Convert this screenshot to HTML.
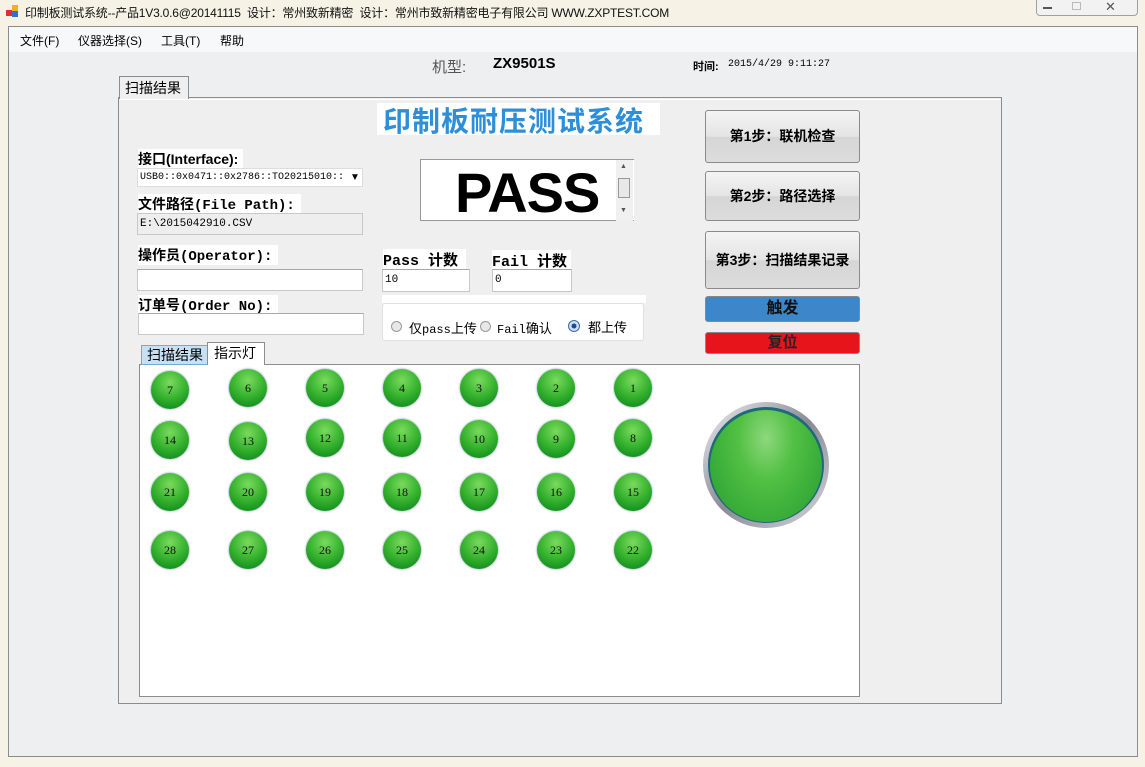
<!DOCTYPE html>
<html><head><meta charset="utf-8"><style>
*{margin:0;padding:0;box-sizing:border-box}
body{width:1145px;height:767px;overflow:hidden;background:#f6f2e6;font-family:"Liberation Sans","Noto Sans CJK SC",sans-serif;position:relative;color:#000}
.a{position:absolute}
.cj{font-family:"Liberation Sans","Noto Sans CJK SC",sans-serif}
.mono{font-family:"Liberation Mono","Noto Sans CJK SC",monospace}
.box{background:#fff;border:1px solid #c8c8c8;border-top-color:#a8a8a8}
.led{position:absolute;width:38px;height:38px;border-radius:50%;background:radial-gradient(circle at 50% 30%,#7ada5e 0%,#36b22e 50%,#159020 82%,#2a6a70 100%);box-shadow:0 0 2px #6a8aa0;font:12px "Liberation Serif",serif;text-align:center;line-height:38px;color:#111}
.btn{position:absolute;left:705px;width:155px;border:1px solid #8a8a8a;border-radius:3px;background:linear-gradient(#f4f4f4,#e4e4e4 50%,#d6d6d6 51%,#dcdcdc);font-weight:bold;font-size:14px;text-align:center}
</style></head><body>
<div class="a" style="left:6px;top:5px;width:13px;height:13px">
<div class="a" style="left:0;top:5px;width:6px;height:6px;background:#e03030"></div>
<div class="a" style="left:6px;top:0;width:6px;height:6px;background:#f0b020"></div>
<div class="a" style="left:6px;top:6px;width:6px;height:6px;background:#3070d0"></div></div>
<div class="a" style="left:25px;top:4px;font-size:12px;color:#111;white-space:nowrap;letter-spacing:-0.2px">印制板测试系统--产品1V3.0.6@20141115&nbsp; 设计：常州致新精密&nbsp; 设计：常州市致新精密电子有限公司 WWW.ZXPTEST.COM</div>
<div class="a" style="left:1036px;top:0;width:102px;height:16px;border:1px solid #a0a0a0;border-top:none;border-radius:0 0 4px 4px;background:#f2f2f2"></div>
<div class="a" style="left:1043px;top:7px;width:9px;height:2px;background:#555"></div>
<div class="a" style="left:1072px;top:2px;width:9px;height:8px;border:1px solid #bbb"></div>
<div class="a" style="left:1105px;top:-1px;font-size:13px;color:#555">✕</div>
<div class="a" style="left:8px;top:26px;width:1130px;height:731px;background:#eeeff0;border:1px solid #8c8c8c"></div>
<div class="a" style="left:9px;top:27px;width:1128px;height:25px;background:#f7f8fa"></div>
<div class="a" style="left:20px;top:32px;font-size:12px">文件(F)</div>
<div class="a" style="left:78px;top:32px;font-size:12px">仪器选择(S)</div>
<div class="a" style="left:161px;top:32px;font-size:12px">工具(T)</div>
<div class="a" style="left:220px;top:32px;font-size:12px">帮助</div>
<div class="a" style="left:432px;top:56px;font-size:15px;color:#555">机型:</div>
<div class="a" style="left:493px;top:55px;font-size:15px;font-weight:bold">ZX9501S</div>
<div class="a" style="left:693px;top:58px;font-size:11px;font-weight:bold">时间:</div>
<div class="a mono" style="left:728px;top:59px;font-size:10px">2015/4/29 9:11:27</div>
<div class="a" style="left:118px;top:97px;width:884px;height:607px;border:1px solid #8c8c8c;background:#efefef"></div>
<div class="a" style="left:120px;top:99px;width:880px;height:1px;background:#fff"></div>
<div class="a" style="left:119px;top:76px;width:70px;height:23px;border:1px solid #8c8c8c;border-bottom:none;background:#efefef;font-size:14px;padding:1px 0 0 5px">扫描结果</div>
<div class="a" style="left:377px;top:103px;width:283px;height:32px;background:#fff"></div>
<div class="a" style="left:383px;top:100px;font-size:28px;font-weight:bold;color:#2e8ed8;letter-spacing:1px;white-space:nowrap">印制板耐压测试系统</div>
<div class="a" style="left:138px;top:149px;font-size:14px;font-weight:bold;background:#fff;padding-right:5px">接口(Interface):</div>
<div class="a box mono" style="left:137px;top:168px;width:226px;height:19px;font-size:10px;padding:3px 2px;border-color:#ddd">USB0::0x0471::0x2786::TO20215010::</div>
<div class="a" style="left:350px;top:172px;font-size:10px">▼</div>
<div class="a" style="left:138px;top:194px;font-size:14px;font-weight:bold;background:#fff;padding-right:6px">文件路径<span class="mono">(File Path):</span></div>
<div class="a mono" style="left:137px;top:213px;width:226px;height:22px;font-size:11px;padding:4px 2px;border:1px solid #c8c8c8;background:#eeeeee">E:\2015042910.CSV</div>
<div class="a" style="left:138px;top:245px;font-size:14px;font-weight:bold;background:#fff;padding-right:6px">操作员<span class="mono">(Operator):</span></div>
<div class="a box" style="left:137px;top:269px;width:226px;height:22px"></div>
<div class="a" style="left:138px;top:295px;font-size:14px;font-weight:bold;background:#fff;padding-right:6px">订单号<span class="mono">(Order No):</span></div>
<div class="a box" style="left:138px;top:313px;width:226px;height:22px"></div>
<div class="a" style="left:420px;top:159px;width:214px;height:62px;background:#fff;border:1px solid #999;border-right:none"></div>
<div class="a" style="left:616px;top:160px;width:17px;height:61px;background:#f0f0f0"></div>
<div class="a" style="left:618px;top:178px;width:12px;height:20px;border:1px solid #999;background:#e8e8e8"></div>
<div class="a" style="left:620px;top:163px;font-size:7px;color:#555">▲</div>
<div class="a" style="left:620px;top:207px;font-size:7px;color:#555">▼</div>
<div class="a" style="left:455px;top:160px;font-size:56px;font-weight:bold;letter-spacing:-1px;line-height:66px">PASS</div>
<div class="a mono" style="left:383px;top:249px;font-size:15px;font-weight:bold;background:#fff;padding-right:8px">Pass <span class="cj">计数</span></div>
<div class="a mono" style="left:492px;top:250px;font-size:15px;font-weight:bold;background:#fff;padding-right:4px">Fail <span class="cj">计数</span></div>
<div class="a box mono" style="left:382px;top:269px;width:88px;height:23px;font-size:11px;padding:4px 2px">10</div>
<div class="a box mono" style="left:492px;top:269px;width:80px;height:23px;font-size:11px;padding:4px 2px">0</div>
<div class="a" style="left:382px;top:295px;width:264px;height:8px;background:#fff"></div>
<div class="a" style="left:382px;top:303px;width:262px;height:38px;background:#fff;border:1px solid #e0e0e0;border-radius:3px"></div>
<div class="a" style="left:391px;top:321px;width:11px;height:11px;border-radius:50%;border:1px solid #999;background:#e8e8e8"></div>
<div class="a" style="left:409px;top:318px;font-size:13px">仅<span class="mono" style="font-size:12px">pass</span>上传</div>
<div class="a" style="left:480px;top:321px;width:11px;height:11px;border-radius:50%;border:1px solid #999;background:#e8e8e8"></div>
<div class="a" style="left:497px;top:318px;font-size:13px"><span class="mono" style="font-size:12px">Fail</span>确认</div>
<div class="a" style="left:568px;top:320px;width:12px;height:12px;border-radius:50%;border:1px solid #3a6ea5;background:radial-gradient(#1a4a90 30%,#cfe0f5 40%)"></div>
<div class="a" style="left:588px;top:317px;font-size:13px">都上传</div>
<div class="btn" style="top:110px;height:53px;line-height:51px">第1步：联机检查</div>
<div class="btn" style="top:171px;height:50px;line-height:48px">第2步：路径选择</div>
<div class="btn" style="top:231px;height:58px;line-height:56px">第3步：扫描结果记录</div>
<div class="a" style="left:705px;top:296px;width:155px;height:26px;border:1px solid #888;border-radius:3px;background:#3d86c9;font-size:16px;font-weight:bold;text-align:center;line-height:23px;color:#111">触发</div>
<div class="a" style="left:705px;top:332px;width:155px;height:22px;border:1px solid #888;border-radius:3px;background:#e8141c;font-size:15px;font-weight:bold;text-align:center;line-height:19px;color:#222">复位</div>
<div class="a" style="left:139px;top:364px;width:721px;height:333px;background:#fff;border:1px solid #8c8c8c"></div>
<div class="a" style="left:141px;top:345px;width:67px;height:20px;background:#c8e0f2;border:1px solid #7aa8cc;font-size:14px;padding-left:5px;line-height:18px">扫描结果</div>
<div class="a" style="left:207px;top:342px;width:58px;height:23px;background:#fff;border:1px solid #8c8c8c;border-bottom:none;font-size:14px;padding-left:6px;line-height:20px">指示灯</div>
<div class="led" style="left:151px;top:371px">7</div>
<div class="led" style="left:229px;top:369px">6</div>
<div class="led" style="left:306px;top:369px">5</div>
<div class="led" style="left:383px;top:369px">4</div>
<div class="led" style="left:460px;top:369px">3</div>
<div class="led" style="left:537px;top:369px">2</div>
<div class="led" style="left:614px;top:369px">1</div>
<div class="led" style="left:151px;top:421px">14</div>
<div class="led" style="left:229px;top:422px">13</div>
<div class="led" style="left:306px;top:419px">12</div>
<div class="led" style="left:383px;top:419px">11</div>
<div class="led" style="left:460px;top:420px">10</div>
<div class="led" style="left:537px;top:420px">9</div>
<div class="led" style="left:614px;top:419px">8</div>
<div class="led" style="left:151px;top:473px">21</div>
<div class="led" style="left:229px;top:473px">20</div>
<div class="led" style="left:306px;top:473px">19</div>
<div class="led" style="left:383px;top:473px">18</div>
<div class="led" style="left:460px;top:473px">17</div>
<div class="led" style="left:537px;top:473px">16</div>
<div class="led" style="left:614px;top:473px">15</div>
<div class="led" style="left:151px;top:531px">28</div>
<div class="led" style="left:229px;top:531px">27</div>
<div class="led" style="left:306px;top:531px">26</div>
<div class="led" style="left:383px;top:531px">25</div>
<div class="led" style="left:460px;top:531px">24</div>
<div class="led" style="left:537px;top:531px">23</div>
<div class="led" style="left:614px;top:531px">22</div>
<div class="a" style="left:703px;top:402px;width:126px;height:126px;border-radius:50%;background:linear-gradient(135deg,#eeeef2,#8a8a96 50%,#d8d8de);"></div>
<div class="a" style="left:708px;top:407px;width:116px;height:116px;border-radius:50%;background:#1f6a7a"></div>
<div class="a" style="left:710px;top:410px;width:112px;height:112px;border-radius:50%;background:radial-gradient(ellipse at 50% 25%,#8ed87c 0%,#52c044 35%,#3cb03a 65%,#2a9a34 100%)"></div>
</body></html>
